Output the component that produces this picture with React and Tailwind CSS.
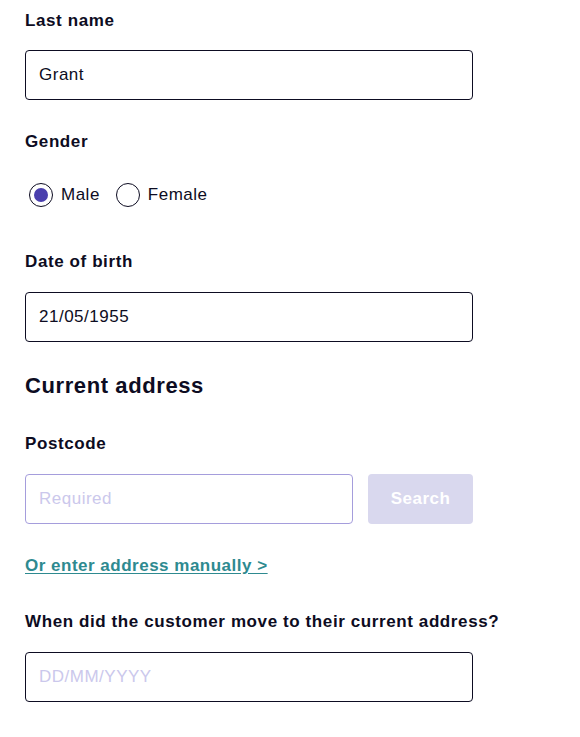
import { useState } from 'react';

const LABEL = 'block text-[17px] leading-6 font-bold text-[#0d0c22] tracking-[0.6px]';
const INPUT = 'h-[50px] rounded-[4px] border px-[13px] text-[17px] tracking-[0.5px] text-[#0d0c22] outline-none';

const Radio = ({ checked, label, onClick }) => (
  <button type="button" onClick={onClick} className="flex items-center gap-2 h-6 leading-6 text-[17px] tracking-[0.5px] text-[#0d0c22]">
    <span className="w-[24px] h-[24px] rounded-full border-[1.5px] border-[#0d0c22] flex items-center justify-center bg-white">
      {checked && <span className="w-[14px] h-[14px] rounded-full bg-[#4a3fae]" />}
    </span>
    {label}
  </button>
);

export default function App() {
  const [gender, setGender] = useState('Male');

  return (
    <div className="bg-white min-h-[737px] pl-[25px] pt-[8px]" style={{ fontFamily: '"Liberation Sans", Arial, sans-serif' }}>
      <div className="w-[448px]">
        <label className={`${LABEL} pt-px`}>Last name</label>
        <input defaultValue="Grant" className={`${INPUT} w-full mt-[17px] border-[#0d0c22]`} />

        <label className={`${LABEL} mt-[30px]`}>Gender</label>
        <div className="flex items-center gap-4 h-6 mt-[29px] pl-[4px]">
          <Radio label="Male" checked={gender === 'Male'} onClick={() => setGender('Male')} />
          <Radio label="Female" checked={gender === 'Female'} onClick={() => setGender('Female')} />
        </div>

        <label className={`${LABEL} mt-[43px]`}>Date of birth</label>
        <input defaultValue="21/05/1955" className={`${INPUT} w-full mt-[18px] border-[#0d0c22]`} />

        <h2 className="mt-[30px] text-[22px] leading-7 font-bold text-[#0d0c22] tracking-[0.6px]">Current address</h2>

        <label className={`${LABEL} mt-[32px]`}>Postcode</label>
        <div className="flex gap-[15px] mt-[18px]">
          <input placeholder="Required" className={`${INPUT} w-[328px] shrink-0 border-[#a59ddc] placeholder:text-[#cbc8ec]`} />
          <button type="button" className="w-[105px] shrink-0 h-[50px] rounded-[4px] bg-[#d9d8ee] text-white font-bold text-[17px] tracking-[0.5px]">
            Search
          </button>
        </div>

        <a href="#" className="block mt-[30px] leading-6 text-[17px] tracking-[0.5px] font-bold text-[#2e8a90] underline underline-offset-2">
          Or enter address manually &gt;
        </a>

        <label className={`${LABEL} mt-[32px] whitespace-nowrap`}>When did the customer move to their current address?</label>
        <input placeholder="DD/MM/YYYY" className={`${INPUT} w-full mt-[18px] border-[#0d0c22] placeholder:text-[#cbc8ec]`} />
      </div>
    </div>
  );
}
